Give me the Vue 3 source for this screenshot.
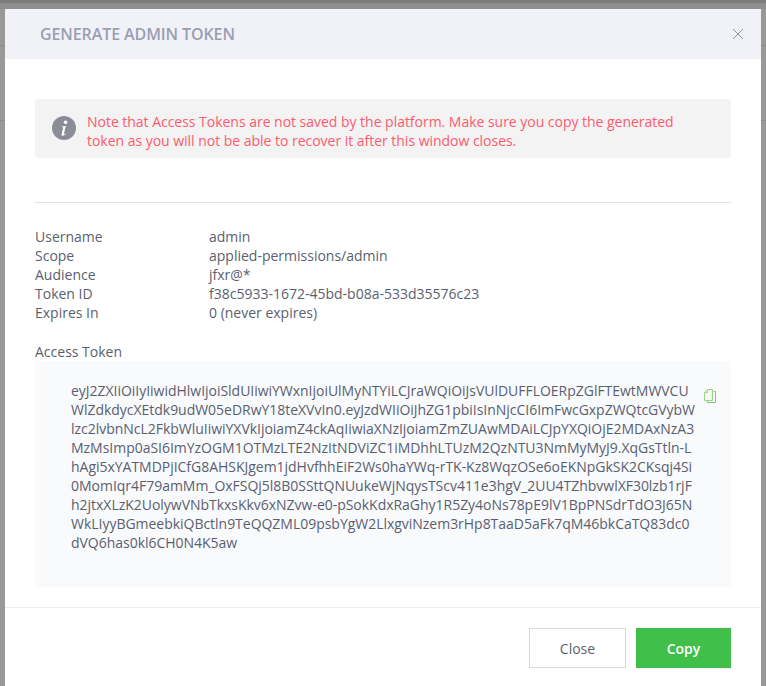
<script setup>
const details = [
  { label: 'Username', value: 'admin' },
  { label: 'Scope', value: 'applied-permissions/admin' },
  { label: 'Audience', value: 'jfxr@*' },
  { label: 'Token ID', value: 'f38c5933-1672-45bd-b08a-533d35576c23' },
  { label: 'Expires In', value: '0 (never expires)' }
]

const tokenLines = [
  'eyJ2ZXIiOiIyIiwidHlwIjoiSldUIiwiYWxnIjoiUlMyNTYiLCJraWQiOiJsVUlDUFFLOERpZGlFTEwtMWVCU',
  'WlZdkdycXEtdk9udW05eDRwY18teXVvIn0.eyJzdWIiOiJhZG1pbiIsInNjcCI6ImFwcGxpZWQtcGVybW',
  'lzc2lvbnNcL2FkbWluIiwiYXVkIjoiamZ4ckAqIiwiaXNzIjoiamZmZUAwMDAiLCJpYXQiOjE2MDAxNzA3',
  'MzMsImp0aSI6ImYzOGM1OTMzLTE2NzItNDViZC1iMDhhLTUzM2QzNTU3NmMyMyJ9.XqGsTtln-L',
  'hAgi5xYATMDPjICfG8AHSKJgem1jdHvfhhEiF2Ws0haYWq-rTK-Kz8WqzOSe6oEKNpGkSK2CKsqj4Si',
  '0MomIqr4F79amMm_OxFSQj5l8B0SSttQNUukeWjNqysTScv411e3hgV_2UU4TZhbvwlXF30lzb1rjF',
  'h2jtxXLzK2UolywVNbTkxsKkv6xNZvw-e0-pSokKdxRaGhy1R5Zy4oNs78pE9lV1BpPNSdrTdO3J65N',
  'WkLIyyBGmeebkiQBctln9TeQQZML09psbYgW2LlxgviNzem3rHp8TaaD5aFk7qM46bkCaTQ83dc0',
  'dVQ6has0kl6CH0N4K5aw'
]
</script>

<template>
  <div class="backdrop">
    <div class="modal">
      <header class="modal-header">
        <h2 class="modal-title">GENERATE ADMIN TOKEN</h2>
        <svg class="close-x" viewBox="0 0 12 12" width="12" height="12">
          <path d="M1 1 L11 11 M11 1 L1 11" fill="none" stroke="#8f93a3" stroke-width="1" />
        </svg>
      </header>

      <div class="modal-body">
        <div class="alert">
          <svg class="info-icon" viewBox="0 0 24 24" width="24" height="24">
            <circle cx="12" cy="12" r="12" fill="#8a8c96" />
            <circle cx="13.6" cy="6.2" r="1.8" fill="#fff" />
            <path d="M9.4 10.4 L14 9.9 L11.9 17.6 Q11.7 18.6 12.6 18.2 L13.8 17.4 L14 18 Q12.4 19.7 10.6 19.8 Q9.2 19.8 9.6 18.2 L11.1 12 Q11.3 11.1 10.3 11.1 L9.3 11.1 Z" fill="#fff" />
          </svg>
          <p class="alert-text">Note that Access Tokens are not saved by the platform. Make sure you copy the generated token as you will not be able to recover it after this window closes.</p>
        </div>

        <hr class="divider" />

        <dl class="details">
          <div v-for="row in details" :key="row.label" class="detail-row">
            <dt>{{ row.label }}</dt>
            <dd>{{ row.value }}</dd>
          </div>
        </dl>

        <div class="token-label">Access Token</div>
        <div class="token-box">
          <div class="token-text">
            <div v-for="line in tokenLines" :key="line">{{ line }}</div>
          </div>
          <svg class="copy-icon" viewBox="0 0 12 15" width="12" height="15">
            <path d="M9.5 2.5 L11.5 2.5 L11.5 13.5 L3.5 13.5 L3.5 11.5" fill="none" stroke="#6fd072" stroke-width="1" />
            <path d="M3.5 0.5 L8.5 0.5 L8.5 11.5 L0.5 11.5 L0.5 3.5 Z" fill="#f4faf2" stroke="#9ad583" stroke-width="1" />
            <path d="M3.5 0.5 L3.5 3.5 L0.5 3.5" fill="none" stroke="#9ad583" stroke-width="1" />
          </svg>
        </div>
      </div>

      <footer class="modal-footer">
        <button class="btn btn-close">Close</button>
        <button class="btn btn-copy">Copy</button>
      </footer>
    </div>
  </div>
</template>

<style scoped>
.backdrop {
  height: 686px;
  overflow: hidden;
  background:
    linear-gradient(#8c8c8c, #8c8c8c) 0 45px / 100% 1px no-repeat,
    linear-gradient(#8c8c8c, #8c8c8c) 0 120px / 100% 1px no-repeat,
    linear-gradient(#7c7c7c 0 3px, #8e8e8e 3px 9px, #999 9px);
  padding: 9px 5px 0;
  box-sizing: border-box;
  font-family: "Open Sans", "Liberation Sans", sans-serif;
  font-size: 14px;
  line-height: 19px;
  color: #5a5f70;
}

.modal {
  background: #fff;
  height: 677px;
  display: flex;
  flex-direction: column;
}

.modal-header {
  height: 50px;
  flex: none;
  background: #f1f2f7;
  display: flex;
  align-items: center;
  justify-content: space-between;
  padding: 0 17px 0 35px;
}

.modal-title {
  margin: 0;
  font-size: 16px;
  font-weight: 600;
  color: #9a9eb3;
  letter-spacing: -0.1px;
}

.close-x {
  display: block;
}

.modal-body {
  padding: 40px 30px 0;
  flex: 1;
}

.alert {
  height: 59px;
  box-sizing: border-box;
  background: #f3f3f3;
  border-radius: 3px;
  display: flex;
  align-items: center;
  padding: 0 30px 0 17px;
  gap: 11px;
}

.info-icon {
  flex: none;
  margin-top: -2px;
}

.alert-text {
  margin: 0;
  padding-top: 5px;
  color: #ff5a6e;
  letter-spacing: -0.025px;
}

.divider {
  border: 0;
  border-top: 1px solid #e2e2e6;
  margin: 44px 0 24px;
}

.details {
  margin: 0;
}

.detail-row {
  display: grid;
  grid-template-columns: 174px 1fr;
}

.detail-row dt,
.detail-row dd {
  margin: 0;
}

.token-label {
  margin-top: 20px;
}

.token-box {
  height: 226px;
  box-sizing: border-box;
  background: #f9fafc;
  padding: 20px 15px 0 36px;
  display: flex;
  justify-content: space-between;
  align-items: flex-start;
  white-space: nowrap;
  letter-spacing: -0.025px;
}

.copy-icon {
  margin-top: 8px;
  flex: none;
}

.modal-footer {
  flex: none;
  height: 79px;
  border-top: 1px solid #ececec;
  display: flex;
  justify-content: flex-end;
  gap: 10px;
  padding: 20px 30px 0;
  box-sizing: border-box;
}

.btn {
  height: 40px;
  box-sizing: border-box;
  font-family: inherit;
  font-size: 14px;
  cursor: pointer;
}

.btn-close {
  width: 97px;
  background: #fff;
  border: 1px solid #d9d9d9;
  color: #5a5f70;
}

.btn-copy {
  width: 95px;
  background: #40bf4a;
  border: 0;
  color: #fff;
  font-weight: 600;
}
</style>
